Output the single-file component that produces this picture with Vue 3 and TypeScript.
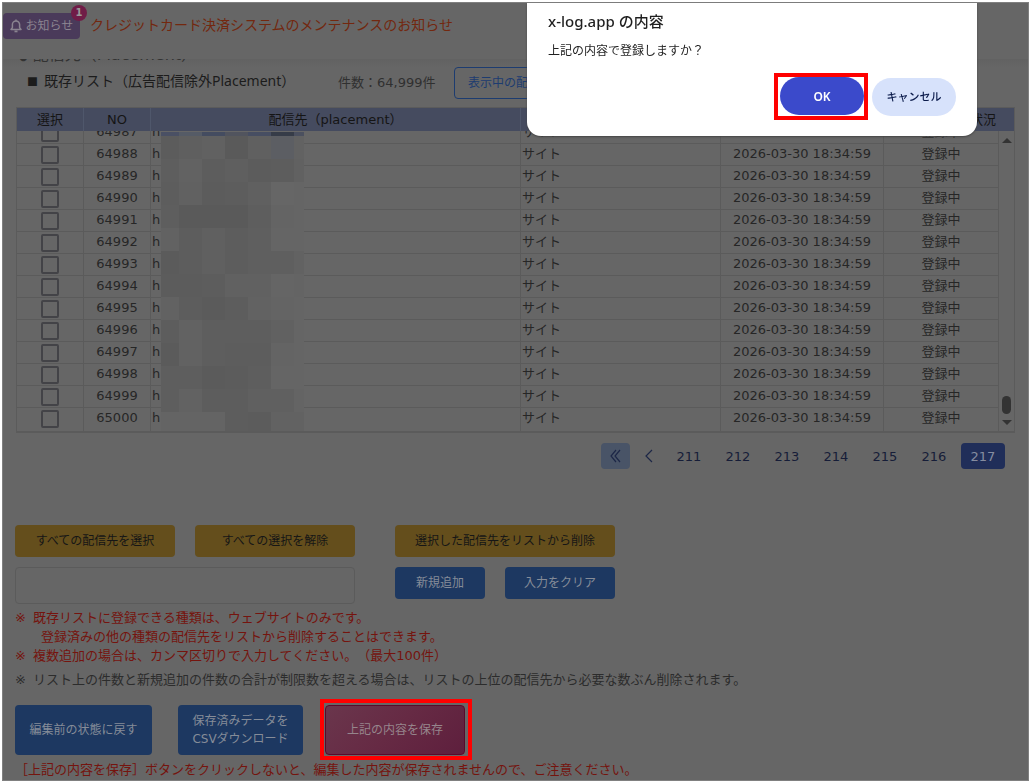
<script setup lang="ts">
import { onMounted, ref } from 'vue'

interface PlacementRow {
  no: number
  kind: string
  date: string
  status: string
}

const rows: PlacementRow[] = Array.from({ length: 14 }, (_, i) => ({
  no: 64987 + i,
  kind: 'サイト',
  date: '2026-03-30 18:34:59',
  status: '登録中',
}))

const pages = [211, 212, 213, 214, 215, 216, 217]
const currentPage = ref(217)
const newPlacement = ref('')
const scroller = ref<HTMLElement | null>(null)

onMounted(() => {
  if (scroller.value) scroller.value.scrollTop = scroller.value.scrollHeight
})

// Pixelated cover over the URLs: column edges, row edges and one shade per tile
const maskX = [0, 18, 41, 64, 87, 110, 133, 143]
const maskY = [0, 4, 27, 50, 73, 96, 119, 142, 165, 188, 211, 234, 257, 280, 299]
const maskShades = [
  '4a5064 555b66 444c60 51545e 474e62 363c48 4b505f',
  '5c5c5c 5f5f5f 616161 5a5a5a 606060 5c5e63 626262',
  '5e5e5e 626262 5d5d5d 5f5f5f 5c5c5c 5d5d5d 616161',
  '5d5d5d 616161 5c5c5c 5d5d5d 606060 666666 656565',
  '5e5e5e 5a5a5a 5a5a5a 5a5a5a 5e5e5e 646464 656565',
  '626262 5d5d5d 606060 5d5d5d 5f5f5f 656565 656565',
  '5b5b5b 5d5d5d 606060 5d5d5d 5f5f5f 5f5f5f 626262',
  '5c5c5c 5c5c5c 5d5d5d 616161 616161 656565 646464',
  '626262 5d5d5d 5b5b5b 5d5d5d 626262 646464 656565',
  '5d5d5d 626262 5e5e5e 5e5e5e 5e5e5e 616161 656565',
  '5b5b5b 626262 5e5e5e 5d5d5d 5d5d5d 646464 656565',
  '5e5e5e 5e5e5e 5b5b5b 5c5c5c 5e5e5e 656565 656565',
  '5e5e5e 626262 5d5d5d 5d5d5d 606060 606060 646464',
  '646464 646464 646464 5d5d5d 5c5c5c 626262 626262',
]
const tiles = maskShades.flatMap((line, r) =>
  line.split(' ').map((shade, c) => ({
    x: maskX[c],
    y: maskY[r],
    w: maskX[c + 1] - maskX[c],
    h: maskY[r + 1] - maskY[r],
    fill: '#' + shade,
  })),
)
</script>

<template>
  <div class="frame">
    <header class="notice">
      <button type="button" class="notice-btn">
        <svg width="12" height="14" viewBox="0 0 12 14" fill="none" stroke="currentColor" stroke-width="1.5" aria-hidden="true">
          <path d="M6 .6v1.2M1 10.5h10L9.600 8.600V5.500a3.600 3.600 0 0 0-7.200 0v3.100z" stroke-linejoin="round" />
          <path d="M4.500 12.400h3" stroke-width="1.800" />
        </svg>
        <span>お知らせ</span>
        <span class="badge">1</span>
      </button>
      <a href="#" class="notice-link">クレジットカード決済システムのメンテナンスのお知らせ</a>
    </header>

    <main class="content">
      <div class="clipped"><h1><span class="dot">●</span>配信先（Placement）</h1></div>

      <div class="list-head">
        <h2><span class="square">■</span>既存リスト（広告配信除外Placement）</h2>
        <span class="count">件数：64,999件</span>
        <button type="button" class="outline">表示中の配信先をコピー</button>
      </div>

      <div class="table-box">
        <div ref="scroller" class="scroller">
          <table>
            <colgroup>
              <col class="c-check" /><col class="c-no" /><col /><col class="c-kind" />
              <col class="c-date" /><col class="c-status" /><col class="c-bar" />
            </colgroup>
            <thead>
              <tr>
                <th>選択</th><th>NO</th><th>配信先（placement）</th><th>種類</th><th>登録日時</th>
                <th colspan="2" class="last">状況</th>
              </tr>
            </thead>
            <tbody>
              <tr v-for="row in rows" :key="row.no">
                <td class="center"><input type="checkbox" :aria-label="`${row.no} を選択`" /></td>
                <td class="center">{{ row.no }}</td>
                <td class="url">h</td>
                <td class="kind">{{ row.kind }}</td>
                <td class="center">{{ row.date }}</td>
                <td class="center">{{ row.status }}</td>
                <td class="gutter"></td>
              </tr>
            </tbody>
          </table>
        </div>
        <svg class="mask" width="143" height="299" shape-rendering="crispEdges" aria-hidden="true">
          <rect v-for="(t, i) in tiles" :key="i" :x="t.x" :y="t.y" :width="t.w" :height="t.h" :fill="t.fill" />
        </svg>
        <div class="bar" aria-hidden="true">
          <svg width="10" height="5"><path d="M0 5 5 0l5 5z" /></svg>
          <span class="thumb"></span>
          <svg width="10" height="5"><path d="M0 0h10L5 5z" /></svg>
        </div>
      </div>

      <nav class="pager" aria-label="ページ">
        <button type="button" class="first" aria-label="最初のページ">
          <svg width="12" height="14" viewBox="0 0 12 14"><path d="M6 1 1 7l5 6M10 1 5 7l5 6" /></svg>
        </button>
        <button type="button" class="prev" aria-label="前のページ">
          <svg width="8" height="14" viewBox="0 0 8 14"><path d="M7 1 1 7l6 6" /></svg>
        </button>
        <button
          v-for="p in pages"
          :key="p"
          type="button"
          class="page"
          :class="{ current: p === currentPage }"
          @click="currentPage = p"
        >{{ p }}</button>
      </nav>

      <div class="tools">
        <button type="button" class="btn yellow w160">すべての配信先を選択</button>
        <button type="button" class="btn yellow w160">すべての選択を解除</button>
        <button type="button" class="btn yellow w220">選択した配信先をリストから削除</button>
      </div>
      <div class="entry">
        <input v-model="newPlacement" type="text" aria-label="配信先" />
        <button type="button" class="btn blue w90">新規追加</button>
        <button type="button" class="btn blue w110">入力をクリア</button>
      </div>

      <p class="note red">
        <span class="mark">※</span>既存リストに登録できる種類は、ウェブサイトのみです。<br />
        <span class="indent">登録済みの他の種類の配信先をリストから削除することはできます。</span><br />
        <span class="mark">※</span>複数追加の場合は、カンマ区切りで入力してください。（最大100件）
      </p>
      <p class="note grey"><span class="mark">※</span>リスト上の件数と新規追加の件数の合計が制限数を超える場合は、リストの上位の配信先から必要な数ぶん削除されます。</p>

      <div class="actions">
        <button type="button" class="btn blue tall revert">編集前の状態に戻す</button>
        <button type="button" class="btn blue tall csv">保存済みデータを<br />CSVダウンロード</button>
        <div class="highlight save-mark">
          <button type="button" class="btn pink tall">上記の内容を保存</button>
        </div>
      </div>
      <p class="note red final">［上記の内容を保存］ボタンをクリックしないと、編集した内容が保存されませんので、ご注意ください。</p>
    </main>

    <div class="dialog" role="dialog" aria-labelledby="dlg-title" aria-describedby="dlg-text">
      <h2 id="dlg-title">x-log.app の内容</h2>
      <p id="dlg-text">上記の内容で登録しますか？</p>
      <div class="dialog-actions">
        <div class="highlight ok-mark"><button type="button" class="pill ok">OK</button></div>
        <button type="button" class="pill cancel">キャンセル</button>
      </div>
    </div>
  </div>
</template>

<style>
body {
  background: #fff;
}
</style>

<style scoped>
* {
  box-sizing: border-box;
}
h1,
h2,
p {
  margin: 0;
  font-weight: 400;
}
button,
input {
  font: inherit;
  padding: 0;
  margin: 0;
  border: 0;
}
.frame {
  position: relative;
  margin: 2px 3px 3px 2px;
  border: 1px solid #808080;
  background: #666;
  color: #222;
  font: 13px/19px "DejaVu Sans", "Noto Sans CJK JP", sans-serif;
  text-spacing-trim: space-all;
  display: flow-root;
}
.notice {
  display: flex;
  align-items: flex-start;
  gap: 10px;
  height: 56px;
  padding-top: 10px;
}
.notice-btn {
  position: relative;
  display: flex;
  align-items: center;
  justify-content: center;
  gap: 4px;
  width: 77px;
  height: 26px;
  border-radius: 4px;
  background: #4a3a5a;
  color: #8a8490;
  font-size: 12px;
}
.badge {
  position: absolute;
  top: -8px;
  right: -7px;
  width: 16px;
  height: 16px;
  border-radius: 50%;
  background: #701c47;
  color: #999;
  font-size: 10px;
  font-weight: 700;
  line-height: 16px;
}
.notice-link {
  color: #73280f;
  font-size: 14px;
  line-height: 24px;
  text-decoration: none;
}
.content {
  padding: 0 13px 1px 12px;
}
.clipped {
  display: flex;
  align-items: flex-end;
  height: 8px;
  margin: 0 -13px 0 -12px;
  padding-left: 16px;
  overflow: hidden;
  background: linear-gradient(#626262, #666);
}
.clipped h1 {
  font-size: 16px;
  line-height: 20px;
  color: #333;
}
.dot {
  margin-right: 5px;
  font-size: 10px;
}
.list-head {
  display: flex;
  align-items: center;
  height: 32px;
  padding-left: 12px;
  white-space: nowrap;
}
.list-head h2 {
  width: 311px;
  padding-bottom: 4px;
  font-family: "Noto Sans", "Noto Sans CJK JP", sans-serif;
  font-size: 14px;
  color: #1c1c1c;
}
.square {
  margin-right: 6px;
  font-size: 11px;
}
.count {
  width: 116px;
  padding-bottom: 2px;
  color: #303030;
}
.outline {
  width: 160px;
  height: 32px;
  border: 1px solid #1d3c70;
  border-radius: 4px;
  background: transparent;
  color: #1d3c70;
  font-size: 12px;
}
.table-box {
  position: relative;
  margin: 8px 0 0 1px;
  border: 1px solid #5b5b5b;
  border-bottom-width: 2px;
}
.scroller {
  height: 323px;
  overflow: hidden;
}
table {
  width: 100%;
  table-layout: fixed;
  border-collapse: separate;
  border-spacing: 0;
}
.c-check,
.c-no {
  width: 67px;
}
.c-kind {
  width: 200px;
}
.c-date {
  width: 163px;
}
.c-status {
  width: 115px;
}
.c-bar {
  width: 15px;
}
th {
  position: sticky;
  top: 0;
  z-index: 1;
  height: 23px;
  padding: 0;
  border-right: 1px solid #4f576b;
  background: #454b5f;
  color: #151515;
  font-weight: 400;
}
th.last {
  padding-right: 18px;
  border-right: 0;
  text-align: right;
}
td {
  height: 22px;
  padding: 0;
  border-right: 1px solid #5b5b5b;
  border-bottom: 1px solid #5b5b5b;
  line-height: 20px;
  vertical-align: top;
  color: #262626;
}
tbody tr:last-child td {
  height: 23px;
  border-bottom: 0;
}
.center {
  text-align: center;
}
.url,
.kind {
  padding-left: 1px;
}
td.gutter {
  border: 0;
}
td input {
  appearance: none;
  display: block;
  width: 18px;
  height: 18px;
  margin: 2px auto 0;
  border: 2px solid #434347;
  border-radius: 2px;
}
.mask {
  position: absolute;
  top: 24px;
  left: 144px;
}
.bar {
  position: absolute;
  top: 23px;
  right: 0;
  bottom: 0;
  width: 15px;
  display: flex;
  flex-direction: column;
  align-items: center;
  padding: 7px 0 6px;
}
.bar svg {
  fill: #333;
}
.thumb {
  width: 9px;
  height: 18px;
  margin: auto 0 6px;
  border-radius: 5px;
  background: #333;
}
.pager {
  display: flex;
  justify-content: flex-end;
  gap: 5px;
  margin: 10px 10px 0 0;
}
.pager button {
  display: flex;
  align-items: center;
  justify-content: center;
  height: 26px;
  border-radius: 4px;
  background: transparent;
  color: #161d38;
}
.pager svg {
  fill: none;
  stroke: #1d2747;
  stroke-width: 1.2;
}
.pager .first {
  width: 29px;
  background: #495467;
}
.pager .prev {
  width: 27px;
}
.pager .page {
  width: 44px;
}
.pager .current {
  background: #202e59;
  color: #858ca0;
}
.tools,
.entry {
  display: flex;
  align-items: flex-start;
  gap: 20px;
}
.tools {
  margin-top: 56px;
}
.entry {
  margin-top: 10px;
}
.tools .w220 {
  margin-left: 20px;
}
.entry input {
  width: 340px;
  height: 37px;
  margin: 0 20px 0 0;
  padding: 0 8px;
  border: 1px solid #5b5b5b;
  border-radius: 4px;
  background: transparent;
  color: #222;
}
.btn {
  height: 32px;
  border-radius: 4px;
  font-size: 12px;
  line-height: 18px;
}
.w90 {
  width: 90px;
}
.w110 {
  width: 110px;
}
.w160 {
  width: 160px;
}
.w220 {
  width: 220px;
}
.yellow {
  background: #644e1c;
  color: #161616;
}
.blue {
  background: #1d3861;
  color: #858c98;
}
.tall {
  height: 50px;
}
.note {
  white-space: nowrap;
}
.mark {
  margin-right: 7px;
}
.red {
  margin-top: 4px;
  color: #75140e;
}
.indent {
  padding-left: 26px;
}
.grey {
  margin-top: 5px;
  color: #2c2c2c;
}
.actions {
  display: flex;
  align-items: center;
  margin-top: 10px;
}
.revert {
  width: 137px;
}
.csv {
  width: 125px;
  margin: 0 17px 0 26px;
}
.highlight {
  display: flex;
  align-items: center;
  border: 4px solid #f00;
}
.save-mark {
  width: 152px;
  height: 61px;
  padding-left: 1px;
}
.pink {
  width: 140px;
  border: 1px solid #5a0a2c;
  background: linear-gradient(135deg, #6a364c, #662a44 50%, #5e1f3d);
  color: #96858c;
}
.final {
  margin-top: 0;
}
.dialog {
  position: absolute;
  z-index: 2;
  top: 0;
  right: 51px;
  width: 450px;
  height: 133px;
  padding: 8px 21px;
  border-radius: 0 0 14px 14px;
  background: #fff;
  color: #1f1f1f;
  box-shadow: 0 1px 2px #444;
  font-family: "Noto Sans", "Noto Sans CJK JP", sans-serif;
}
.dialog h2 {
  font-size: 15px;
  font-weight: 500;
  line-height: 20px;
}
.dialog p {
  margin-top: 10px;
  font-size: 12px;
  line-height: 20px;
}
.dialog-actions {
  display: flex;
  align-items: center;
  justify-content: flex-end;
  gap: 4px;
  margin-top: 12px;
}
.ok-mark {
  align-items: flex-start;
  width: 94px;
  height: 47px;
  padding-left: 2px;
}
.pill {
  width: 84px;
  height: 38px;
  border-radius: 19px;
  font-size: 12px;
  font-weight: 500;
}
.ok {
  background: #3b4acb;
  color: #fff;
  font-weight: 600;
}
.cancel {
  background: #d7e2fb;
  color: #0a1a4a;
  font-size: 11px;
}
</style>
